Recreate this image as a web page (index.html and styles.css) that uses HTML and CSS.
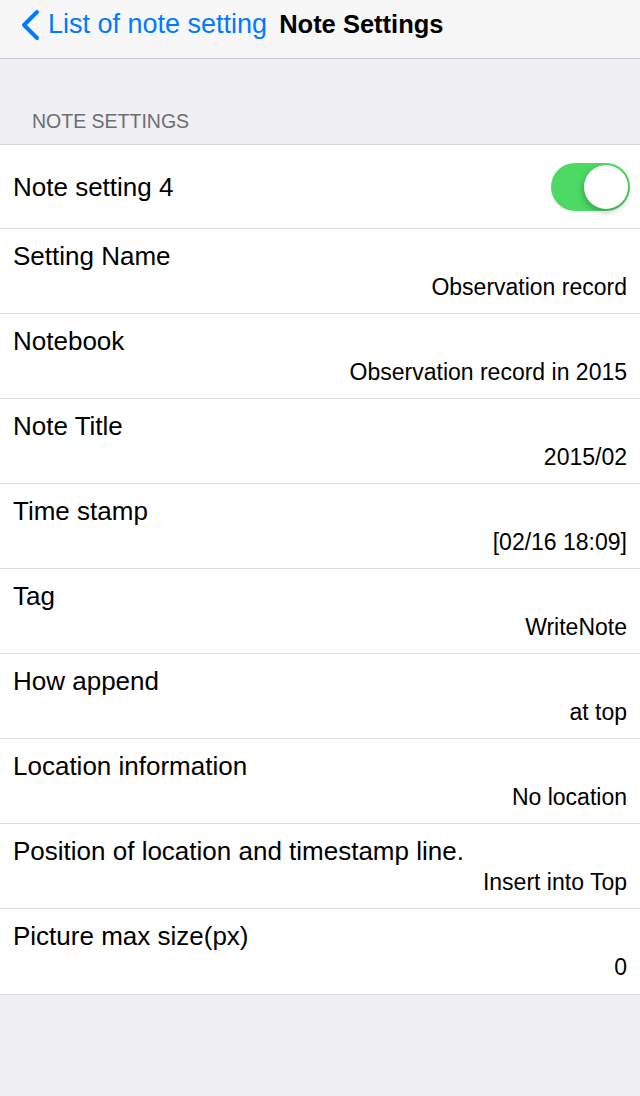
FILE: index.html
```html
<!DOCTYPE html>
<html lang="en">
<head>
  <meta charset="UTF-8" />
  <title>Note Settings</title>
  <link rel="stylesheet" href="styles.css">
</head>
<body>

  <!-- Barra de navegación -->
  <div class="navbar">
    <div class="back">
      <svg class="chevron" width="22" height="32" viewBox="0 0 22 32">
        <path d="M18 3 L5 16 L18 29" fill="none" stroke="#007aff" stroke-width="4" stroke-linecap="round" stroke-linejoin="round"/>
      </svg>
      <span>List of note setting</span>
    </div>
    <div class="title">Note Settings</div>
  </div>

  <!-- Sección -->
  <div class="section-header">NOTE SETTINGS</div>

  <div class="table">
    <div class="row row-switch">
      <span class="label">Note setting 4</span>
      <div class="switch"><div class="knob"></div></div>
    </div>
    <div class="row">
      <span class="label">Setting Name</span>
      <span class="value">Observation record</span>
    </div>
    <div class="row">
      <span class="label">Notebook</span>
      <span class="value">Observation record in 2015</span>
    </div>
    <div class="row">
      <span class="label">Note Title</span>
      <span class="value">2015/02</span>
    </div>
    <div class="row">
      <span class="label">Time stamp</span>
      <span class="value">[02/16 18:09]</span>
    </div>
    <div class="row">
      <span class="label">Tag</span>
      <span class="value">WriteNote</span>
    </div>
    <div class="row">
      <span class="label">How append</span>
      <span class="value">at top</span>
    </div>
    <div class="row">
      <span class="label">Location information</span>
      <span class="value">No location</span>
    </div>
    <div class="row">
      <span class="label">Position of location and timestamp line.</span>
      <span class="value">Insert into Top</span>
    </div>
    <div class="row">
      <span class="label">Picture max size(px)</span>
      <span class="value">0</span>
    </div>
  </div>

</body>
</html>
```

FILE: styles.css
```css
/* === Reset y fondo === */
* { margin:0; padding:0; box-sizing:border-box; }
html, body {
  width:100%; min-height:100%;
  background: #efeff4;
  font-family: "Liberation Sans", Arial, sans-serif;
  color: #000;
}

/* === Navbar === */
.navbar {
  height: 59px;
  background: #f7f7f8;
  border-bottom: 1px solid #c8c7cc;
  display: flex; align-items: center;
  padding: 0 0 9px 19px;
}
.back {
  display: flex; align-items: center;
  color: #007aff;
  font-size: 27px;
}
.back .chevron { margin-right: 7px; }
.title {
  margin-left: 12px;
  font-size: 25.5px;
  font-weight: bold;
}

/* === Cabecera de sección === */
.section-header {
  height: 86px;
  padding: 0 0 11px 32px;
  display: flex; align-items: flex-end;
  font-size: 19.5px;
  color: #6d6d72;
  border-bottom: 1px solid #d9d9dd;
}

/* === Tabla === */
.table {
  background: #fff;
  border-bottom: 1px solid #d9d9dd;
}
.row {
  height: 85px;
  padding: 11px 13px 0;
  display: flex; flex-direction: column;
  border-bottom: 1px solid #dededf;
}
.row:last-child { border-bottom: none; }
.row .label {
  font-size: 26px;
  line-height: 32px;
}
.row .value {
  font-size: 23px;
  line-height: 30px;
  text-align: right;
}
.row-switch {
  height: 84px;
  padding-top: 0;
  flex-direction: row; align-items: center; justify-content: space-between;
  padding-right: 10px;
}

/* === Switch === */
.switch {
  width: 79px; height: 48px;
  border-radius: 24px;
  background: #4cd964;
  position: relative;
}
.switch .knob {
  position: absolute;
  top: 2px; right: 2px;
  width: 44px; height: 44px;
  border-radius: 50%;
  background: #fff;
  box-shadow: -1px 3px 6px rgba(0,0,0,0.25);
}
```
